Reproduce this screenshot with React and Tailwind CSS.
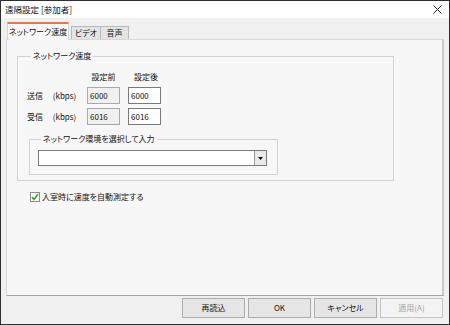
const font = {
  fontFamily: '"Noto Sans CJK JP", "Noto Sans", sans-serif',
};

const TitleBar = () => (
  <div className="h-[17px] bg-white flex items-center justify-between pl-[4px] pr-[6px]">
    <span className="text-[8.5px] leading-none text-[#111]">遠隔設定 [参加者]</span>
    <svg width="9" height="9" viewBox="0 0 9 9" className="mr-[1px]">
      <path d="M0.5 0.5 L8.5 8.5 M8.5 0.5 L0.5 8.5" stroke="#222" strokeWidth="1" />
    </svg>
  </div>
);

const Tabs = () => (
  <div className="flex items-end h-[18px] pl-[1px] relative z-10 -mb-px">
    <div className="w-[62px] h-[18px] bg-[#f9f9f9] border border-[#d6d6d6] border-b-0 border-t-2 border-t-[#f07840] flex items-center justify-center text-[8px] text-[#111]">
      ネットワーク速度
    </div>
    <div className="h-[13px] mb-px ml-[2px] w-[30px] bg-[#e4e4e4] border border-[#b9b9b9] border-b-0 flex items-center justify-center text-[8px] text-[#111]">
      ビデオ
    </div>
    <div className="h-[13px] mb-px w-[28px] bg-[#e4e4e4] border border-[#b9b9b9] border-b-0 border-l-0 flex items-center justify-center text-[8px] text-[#111]">
      音声
    </div>
  </div>
);

const SpeedInput = ({ value, gray }) => (
  <div
    className={
      "h-[17px] border flex items-center pl-[2px] text-[8px] text-[#111] " +
      (gray ? "bg-[#f0f0f0] border-[#a9a9a9]" : "bg-white border-[#7a7a7a]")
    }
  >
    {value}
  </div>
);

const SpeedGroup = () => (
  <fieldset className="w-[377px] border border-[#d2d2d2] pl-[9px] pb-[5px] ml-[10px] mt-[10px]">
    <legend className="ml-[4px] px-[2px] text-[8px] leading-[12px] text-[#111]">ネットワーク速度</legend>
    <div className="grid grid-cols-[52px_33px_33px] gap-x-[8px] gap-y-[4px] items-center pt-[9px] text-[8px] text-[#111]">
      <div className="h-[12px]" />
      <div className="h-[12px] leading-[12px] text-center">設定前</div>
      <div className="h-[12px] leading-[12px] text-center pl-[3px]">設定後</div>
      <div className="mt-px whitespace-nowrap">送信 　(kbps)</div>
      <SpeedInput value="6000" gray />
      <SpeedInput value="6000" />
      <div className="whitespace-nowrap">受信 　(kbps)</div>
      <SpeedInput value="6016" gray />
      <SpeedInput value="6016" />
    </div>
    <fieldset className="w-[249px] ml-[2px] mt-[8px] border border-[#d2d2d2] px-[8px] pt-[5px] pb-[8px]">
      <legend className="ml-[3px] px-[2px] text-[8px] leading-[12px] text-[#111]">ネットワーク環境を選択して入力</legend>
      <div className="w-[229px] h-[16px] bg-white border border-[#7a7a7a] flex justify-end">
        <div className="w-[12px] h-full border-l border-[#9a9a9a] bg-[#e9e9e9] flex items-center justify-center">
          <svg width="5" height="3" viewBox="0 0 5 3">
            <path d="M0 0 H5 L2.5 3 Z" fill="#111" />
          </svg>
        </div>
      </div>
    </fieldset>
  </fieldset>
);

const AutoCheck = () => (
  <div className="flex items-center ml-[23px] mt-[10px] gap-[2px]">
    <div className="w-[10px] h-[10px] bg-white border border-[#8f8f8f] flex items-center justify-center">
      <svg width="8" height="8" viewBox="0 0 8 8">
        <path d="M1 4 L3 6.5 L7 1" fill="none" stroke="#3aa02a" strokeWidth="1.6" />
      </svg>
    </div>
    <span className="text-[8px] text-[#111]">入室時に速度を自動測定する</span>
  </div>
);

const Button = ({ children, disabled }) => (
  <button
    type="button"
    disabled={disabled}
    className={
      "w-[63px] h-[20px] border text-[8px] flex items-center justify-center " +
      (disabled
        ? "bg-[#f3f3f3] border-[#c4c4c4] text-[#a3a3a3]"
        : "bg-[#e6e6e6] border-[#acacac] text-[#111]")
    }
  >
    {children}
  </button>
);

export default function App() {
  return (
    <div
      className="w-[450px] h-[325px] bg-[#f0f0f0] border border-[#2f2f2f] flex flex-col [font-feature-settings:'palt']"
      style={font}
    >
      <TitleBar />
      <div className="flex-1 flex flex-col px-[5px] pt-[4px]">
        <Tabs />
        <div className="h-[257px] bg-[#f7f7f7] border border-[#d9d9d9] border-r-2 border-r-[#c9c9c9] border-b-[#a4a4a4] flex flex-col">
          <SpeedGroup />
          <AutoCheck />
        </div>
        <div className="flex justify-end gap-[3px] mt-[2px] pr-[1px]">
          <Button>再読込</Button>
          <Button>OK</Button>
          <Button>キャンセル</Button>
          <Button disabled>適用(A)</Button>
        </div>
      </div>
    </div>
  );
}
